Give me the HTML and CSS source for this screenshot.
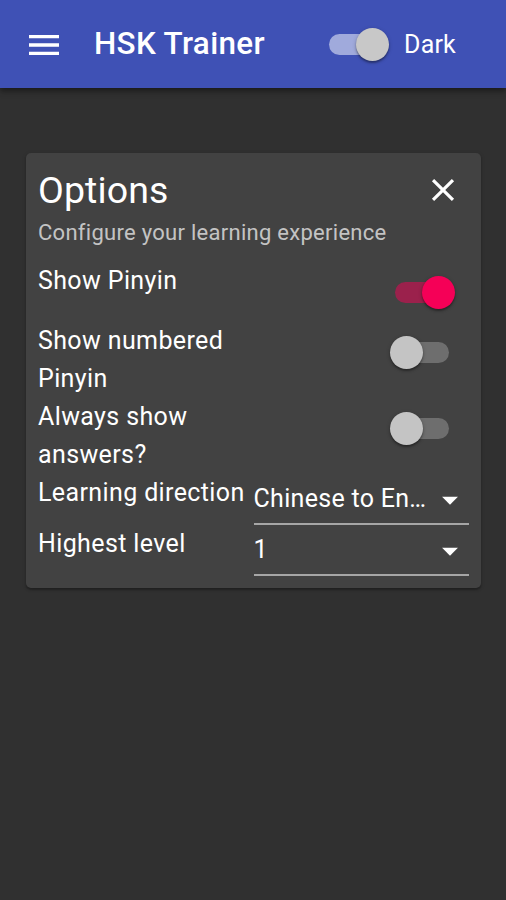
FILE: index.html
```html
<!DOCTYPE html>
<html lang="en">
<head>
<meta charset="utf-8">
<title>HSK Trainer</title>
<link rel="stylesheet" href="styles.css">
</head>
<body>
<header class="appbar">
  <button class="menu-btn" aria-label="menu">
    <svg class="menu-icon" viewBox="0 0 24 24" width="40" height="40"><path d="M3 18h18v-2H3v2zm0-5h18v-2H3v2zm0-7v2h18V6H3z" fill="#fff"/></svg>
  </button>
  <h1 class="title">HSK Trainer</h1>
  <label class="theme-toggle">
    <span class="switch switch-appbar on"><span class="track"></span><span class="thumb"></span></span>
    <span class="theme-label">Dark</span>
  </label>
</header>

<main class="main">
  <section class="card">
    <div class="card-head">
      <h2 class="card-title">Options</h2>
      <button class="close-btn" aria-label="close">
        <svg viewBox="0 0 24 24" width="38" height="38"><path d="M19 6.41L17.59 5 12 10.59 6.41 5 5 6.41 10.59 12 5 17.59 6.41 19 12 13.41 17.59 19 19 17.59 13.41 12z" fill="#fff"/></svg>
      </button>
    </div>
    <p class="subtitle">Configure your learning experience</p>

    <div class="options">
      <div class="label">Show Pinyin</div>
      <div class="control"><span class="switch switch-pink on"><span class="track"></span><span class="thumb"></span></span></div>

      <div class="label">Show numbered Pinyin</div>
      <div class="control"><span class="switch"><span class="track"></span><span class="thumb"></span></span></div>

      <div class="label">Always show answers?</div>
      <div class="control"><span class="switch"><span class="track"></span><span class="thumb"></span></span></div>

      <div class="label">Learning direction</div>
      <div class="control-select">
        <div class="select">
          <span class="select-value">Chinese to English</span>
          <svg class="select-arrow" viewBox="0 0 24 24" width="38" height="38"><path d="M7 10l5 5 5-5z" fill="#fff"/></svg>
        </div>
      </div>

      <div class="label">Highest level</div>
      <div class="control-select">
        <div class="select">
          <span class="select-value">1</span>
          <svg class="select-arrow" viewBox="0 0 24 24" width="38" height="38"><path d="M7 10l5 5 5-5z" fill="#fff"/></svg>
        </div>
      </div>
    </div>
  </section>
</main>
</body>
</html>
```

FILE: styles.css
```css
* { box-sizing: border-box; }

html, body {
  margin: 0;
  padding: 0;
  height: 100%;
}

body {
  background: #303030;
  font-family: Roboto, "Noto Sans", "Liberation Sans", sans-serif;
  color: #fff;
}

button {
  background: none;
  border: 0;
  padding: 0;
  margin: 0;
  cursor: pointer;
  display: flex;
}

.appbar {
  height: 88px;
  background: #3f51b5;
  display: flex;
  align-items: center;
  padding: 0 25px 0 24px;
  box-shadow: 0 3px 5px rgba(0,0,0,0.35), 0 1px 10px rgba(0,0,0,0.2);
  position: relative;
  z-index: 1;
}

.menu-btn {
  width: 40px;
  height: 40px;
  margin-top: 2px;
}

.title {
  margin: 0 0 0 30px;
  font-size: 31.4px;
  font-weight: 500;
  letter-spacing: 0.35px;
  flex: 1;
  line-height: 1;
}

.theme-toggle {
  display: flex;
  align-items: center;
}

.theme-label {
  font-size: 25px;
  letter-spacing: 0.2px;
  margin-left: 1px;
  margin-right: 25px;
}

/* switch */
.switch {
  display: grid;
  width: 93px;
  height: 60px;
  align-items: center;
  flex-shrink: 0;
}

.switch .track,
.switch .thumb {
  grid-area: 1 / 1;
}

.switch .track {
  width: 54px;
  height: 21px;
  border-radius: 11px;
  margin-left: 19px;
  background: #6e6e6e;
}

.switch .thumb {
  width: 33px;
  height: 33px;
  border-radius: 50%;
  background: #c4c4c4;
  margin-left: 14px;
  box-shadow: 0 2px 2px rgba(0,0,0,0.3), 0 1px 4px rgba(0,0,0,0.2);
}

.switch.on .thumb {
  margin-left: 46px;
}

.switch-pink .track {
  background: #9b214c;
}

.switch-pink .thumb {
  background: #f50057;
  margin-left: 47px;
}

.switch-appbar .track {
  background: #a0aadc;
}

.switch-appbar .thumb {
  background: #c8c8c8;
}

/* card */
.main {
  padding: 65px 25px 0 26px;
}

.card {
  background: #424242;
  border-radius: 5px;
  padding: 12px;
  box-shadow: 0 2px 2px rgba(0,0,0,0.25), 0 1px 4px rgba(0,0,0,0.15);
}

.card-head {
  display: flex;
  align-items: center;
  justify-content: space-between;
}

.card-title {
  margin: 0;
  font-size: 37.5px;
  font-weight: 400;
  line-height: 50px;
  letter-spacing: 0.1px;
}

.close-btn {
  margin-right: 7px;
  margin-top: -1px;
}

.subtitle {
  margin: 2px 0 0 0;
  font-size: 22px;
  line-height: 31px;
  color: rgba(255,255,255,0.7);
  letter-spacing: 0.28px;
}

.options {
  display: grid;
  grid-template-columns: 1fr 1fr;
  margin-top: 14px;
}

.label {
  font-size: 25px;
  line-height: 38px;
  letter-spacing: 0.38px;
  white-space: normal;
}

.control {
  display: flex;
  justify-content: flex-end;
}

.control-select {
  display: flex;
  flex-direction: column;
  min-width: 0;
}

.select {
  display: flex;
  align-items: center;
  height: 51px;
  padding: 10px 0 9px 0;
  border-bottom: 2px solid #a6a6a6;
  font-size: 25px;
  letter-spacing: 0.3px;
  min-width: 0;
}

.select-value {
  flex: 1;
  min-width: 0;
  white-space: nowrap;
  overflow: hidden;
  text-overflow: ellipsis;
  line-height: 30px;
}

.select-arrow {
  flex-shrink: 0;
  margin-top: 1px;
}
```
